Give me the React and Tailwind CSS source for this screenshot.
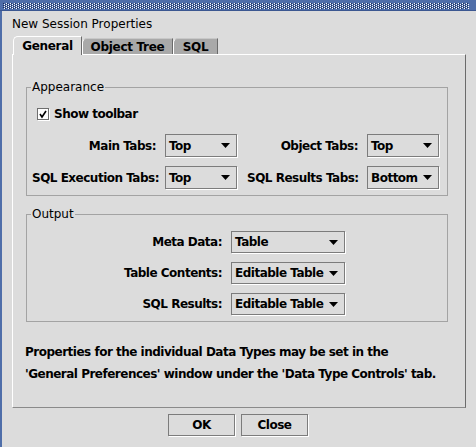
const font = { fontFamily: '"DejaVu Sans", "Liberation Sans", sans-serif' };

function TitleBar() {
  return (
    <div className="h-[11px] shrink-0 bg-[#4f6ea9] border-b border-[#3b5791]">
      <svg width="476" height="10" className="block">
        <defs>
          <pattern id="dots" width="4" height="2" patternUnits="userSpaceOnUse">
            <rect x="0" y="0" width="1" height="1" fill="#ffffff" />
            <rect x="1" y="0" width="1" height="1" fill="#1b2d59" />
            <rect x="2" y="1" width="1" height="1" fill="#ffffff" />
            <rect x="3" y="1" width="1" height="1" fill="#1b2d59" />
          </pattern>
        </defs>
        <rect x="3" y="3" width="466" height="6" fill="url(#dots)" />
      </svg>
    </div>
  );
}

function Arrow() {
  return (
    <svg width="9" height="5" viewBox="0 0 9 5" className="shrink-0">
      <path d="M0 0h9L4.5 5z" fill="#000" />
    </svg>
  );
}

function Combo({ value, width, height }) {
  return (
    <div
      className="flex items-center justify-between border border-[#7c7c7c] bg-[#dcdcdc] pl-[3px] pr-[6px] shadow-[1px_1px_0_#ffffff] text-[12px] font-bold tracking-[-0.5px] text-black"
      style={{ width, height }}
    >
      <span className="whitespace-nowrap leading-none">{value}</span>
      <Arrow />
    </div>
  );
}

function Tab({ label, active, width }) {
  if (active) {
    return (
      <div
        className="relative z-10 flex h-[19px] items-center justify-center rounded-tl-[5px] border-l border-t border-r border-l-white border-t-white border-r-[#6b6b6b] bg-[#dcdcdc] text-[12px] font-bold tracking-[-0.3px]"
        style={{ width }}
      >
        {label}
      </div>
    );
  }
  return (
    <div
      className="flex h-[17px] items-center justify-center rounded-tl-[5px] border-l border-t border-r border-l-white border-t-[#c8c8c8] border-r-[#6b6b6b] bg-[#a9a9a9] text-[12px] font-bold tracking-[-0.3px]"
      style={{ width }}
    >
      {label}
    </div>
  );
}

function Label({ children, width }) {
  return (
    <div
      className="text-right text-[12px] font-bold leading-[14px] tracking-[-0.5px] whitespace-nowrap"
      style={{ width }}
    >
      {children}
    </div>
  );
}

export default function App() {
  return (
    <div className="flex h-[447px] w-[476px] flex-col overflow-hidden bg-[#dcdcdc] text-black" style={font}>
      <TitleBar />
      <div className="flex flex-1 flex-col border-l-2 border-[#4f6ea9]">
        <div className="mt-[6px] pl-[10px] text-[12px] leading-[14px]">New Session Properties</div>

        <div className="mt-[5px] -mb-px flex items-end pl-[11px]">
          <Tab label="General" active width={69} />
          <Tab label="Object Tree" width={91} />
          <Tab label="SQL" width={45} />
        </div>

        <div className="ml-[10px] flex h-[354px] w-[454px] flex-col border border-t-white border-l-white border-r-[#6b6b6b] border-b-[#8a8a8a]">
          <fieldset className="mx-[13px] mt-[25px] w-[422px] border border-[#a3a3a3] pb-[6px]">
            <legend className="ml-[4px] px-[1px] text-[12px] leading-[14px]">Appearance</legend>
            <div className="mt-[13px] flex items-center pl-[10px]">
              <div className="relative h-[12px] w-[12px] border border-[#6e6e6e] bg-white shadow-[1px_1px_0_#ffffff]">
                <svg width="10" height="10" viewBox="0 0 10 10" className="absolute left-0 top-0">
                  <path d="M2 5l2 3 4-6" stroke="#000" strokeWidth="1.6" fill="none" />
                </svg>
              </div>
              <span className="ml-[5px] text-[12px] font-bold leading-[14px] tracking-[-0.5px]">Show toolbar</span>
            </div>
            <div className="mt-[13px] grid grid-cols-[124px_73px_111px_73px] items-center gap-x-[9px] gap-y-[9px] pl-[5px]">
              <Label>Main Tabs:</Label>
              <Combo value="Top" width={72} height={23} />
              <Label>Object Tabs:</Label>
              <Combo value="Top" width={72} height={23} />
              <Label>SQL Execution Tabs:</Label>
              <Combo value="Top" width={72} height={23} />
              <Label>SQL Results Tabs:</Label>
              <Combo value="Bottom" width={72} height={23} />
            </div>
          </fieldset>

          <fieldset className="mx-[13px] mt-[11px] w-[422px] border border-[#a3a3a3] pb-[6px]">
            <legend className="ml-[4px] px-[1px] text-[12px] leading-[14px]">Output</legend>
            <div className="mt-[10px] grid grid-cols-[190px_115px] items-center gap-x-[9px] gap-y-[9px] pl-[5px]">
              <Label>Meta Data:</Label>
              <Combo value="Table" width={114} height={22} />
              <Label>Table Contents:</Label>
              <Combo value="Editable Table" width={114} height={22} />
              <Label>SQL Results:</Label>
              <Combo value="Editable Table" width={114} height={22} />
            </div>
          </fieldset>

          <div className="mt-[19px] pl-[12px] text-[12px] font-bold leading-[22px] tracking-[-0.5px] whitespace-nowrap">
            <p>Properties for the individual Data Types may be set in the</p>
            <p>'General Preferences' window under the 'Data Type Controls' tab.</p>
          </div>
        </div>

        <div className="mt-[6px] flex justify-center gap-[6px] pr-[2px]">
          {["OK", "Close"].map((b) => (
            <button
              key={b}
              type="button"
              className="flex h-[22px] w-[67px] items-center justify-center border border-[#7c7c7c] bg-[#dcdcdc] text-[12px] font-bold tracking-[-0.5px] shadow-[1px_1px_0_#ffffff]"
            >
              {b}
            </button>
          ))}
        </div>
      </div>
    </div>
  );
}
